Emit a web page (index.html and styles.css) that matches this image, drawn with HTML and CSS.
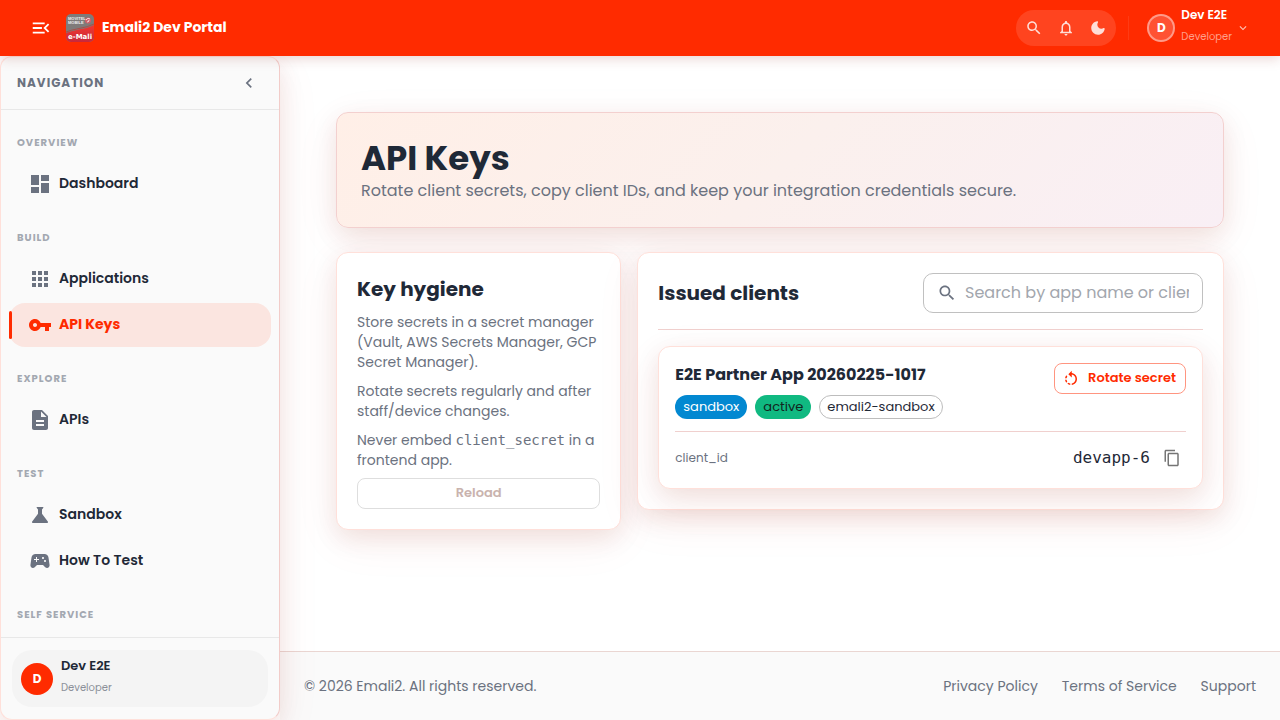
FILE: index.html
```html
<!DOCTYPE html>
<html lang="en">
<head>
<meta charset="utf-8">
<meta name="viewport" content="width=device-width, initial-scale=1">
<title>API Keys - Emali2 Dev Portal</title>
<link rel="stylesheet" href="styles.css">
</head>
<body>
<header class="topbar">
  <button class="icon-btn" type="button" aria-label="Collapse menu"><svg class="i22" viewBox="0 0 24 24"><path d="M3 18h13v-2H3v2zm0-5h10v-2H3v2zm0-7v2h13V6H3zm18 9.59L17.42 12 21 8.41 19.59 7l-5 5 5 5L21 15.59z"/></svg></button>
  <svg class="logo" viewBox="0 0 28 28" role="img" aria-label="e-Mali">
    <defs>
      <linearGradient id="lg" x1="0" y1="0" x2="0" y2="1"><stop offset="0" stop-color="#f2382f"/><stop offset="1" stop-color="#c8283c"/></linearGradient>
      <clipPath id="lc"><rect width="28" height="28" rx="5"/></clipPath>
    </defs>
    <g clip-path="url(#lc)">
      <rect width="28" height="28" fill="#7f7b7a"/>
      <path d="M0 19Q5 17 13 15.500Q22 14 28 11V28H0z" fill="url(#lg)"/>
      <path d="M0 18Q5 16 13 14.500Q22 13 28 10" fill="none" stroke="#a9504b"/>
      <circle cx="22" cy="6.500" r="3" fill="#d0606a"/><path d="M20 6q2-3 4-1M21 8q2 0 2-2" fill="none" stroke="#fff" stroke-width=".8"/>
      <text class="logo-small" x="2" y="6">MOVITEL</text>
      <text class="logo-small" x="2" y="10">MOBILE</text>
      <text class="logo-big" x="2" y="25">e-Mali</text>
    </g>
  </svg>
  <span class="brand">Emali2 Dev Portal</span>
  <div class="tools">
    <button class="tool" type="button" aria-label="Search"><svg class="i18" viewBox="0 0 24 24"><path d="M15.5 14h-.79l-.28-.27C15.41 12.59 16 11.11 16 9.5 16 5.91 13.09 3 9.5 3S3 5.91 3 9.5 5.91 16 9.5 16c1.61 0 3.09-.59 4.23-1.57l.27.28v.79l5 4.99L20.49 19l-4.99-5zm-6 0C7.01 14 5 11.99 5 9.5S7.01 5 9.5 5 14 7.01 14 9.5 11.99 14 9.5 14z"/></svg></button>
    <button class="tool" type="button" aria-label="Notifications"><svg class="i18" viewBox="0 0 24 24"><path d="M12 22c1.1 0 2-.9 2-2h-4c0 1.1.9 2 2 2zm6-6v-5c0-3.07-1.63-5.64-4.5-6.32V4c0-.83-.67-1.5-1.5-1.5s-1.5.67-1.5 1.5v.68C7.64 5.36 6 7.92 6 11v5l-2 2v1h16v-1l-2-2zm-2 1H8v-6c0-2.48 1.51-4.5 4-4.5s4 2.02 4 4.5v6z"/></svg></button>
    <button class="tool" type="button" aria-label="Dark mode"><svg class="i18" viewBox="0 0 24 24"><path d="M11.01 3.05C6.51 3.54 3 7.36 3 12c0 4.97 4.03 9 9 9 4.63 0 8.45-3.5 8.95-8 .09-.79-.78-1.42-1.54-.95-.84.54-1.84.85-2.91.85-2.98 0-5.4-2.42-5.4-5.4 0-1.06.31-2.06.84-2.89.45-.67-.04-1.63-.93-1.56z"/></svg></button>
  </div>
  <button class="account" type="button">
    <span class="avatar avatar-light">D</span>
    <span class="who"><span class="who-name">Dev E2E</span><span class="who-role">Developer</span></span>
    <svg class="i14" viewBox="0 0 24 24"><path d="M7.41 8.59 12 13.17l4.59-4.58L18 10l-6 6-6-6z"/></svg>
  </button>
</header>

<div class="shell">
  <aside class="sidebar">
    <div class="side-head"><span>NAVIGATION</span><button class="icon-btn" type="button" aria-label="Close navigation"><svg class="i20" viewBox="0 0 24 24"><path d="M15.41 7.41 14 6l-6 6 6 6 1.41-1.41L10.83 12z"/></svg></button></div>
    <nav class="side-nav">
      <section class="group"><h2 class="group-title">OVERVIEW</h2>
        <a class="item" href="#"><svg class="i24" viewBox="0 0 24 24"><path d="M3 13h8V3H3v10zm0 8h8v-6H3v6zm10 0h8V11h-8v10zm0-18v6h8V3h-8z"/></svg><span>Dashboard</span></a>
      </section>
      <section class="group"><h2 class="group-title">BUILD</h2>
        <a class="item" href="#"><svg class="i24" viewBox="0 0 24 24"><path d="M4 8h4V4H4v4zm6 12h4v-4h-4v4zm-6 0h4v-4H4v4zm0-6h4v-4H4v4zm6 0h4v-4h-4v4zm6-10v4h4V4h-4zm-6 4h4V4h-4v4zm6 6h4v-4h-4v4zm0 6h4v-4h-4v4z"/></svg><span>Applications</span></a>
        <a class="item active" href="#" aria-current="page"><svg class="i24" viewBox="0 0 24 24"><path d="M12.65 10C11.83 7.67 9.61 6 7 6c-3.31 0-6 2.69-6 6s2.69 6 6 6c2.61 0 4.83-1.67 5.65-4H17v4h4v-4h2v-4H12.65zM7 14c-1.1 0-2-.9-2-2s.9-2 2-2 2 .9 2 2-.9 2-2 2z"/></svg><span>API Keys</span></a>
      </section>
      <section class="group"><h2 class="group-title">EXPLORE</h2>
        <a class="item" href="#"><svg class="i24" viewBox="0 0 24 24"><path d="M14 2H6c-1.1 0-1.99.9-1.99 2L4 20c0 1.1.89 2 1.99 2H18c1.1 0 2-.9 2-2V8l-6-6zm2 16H8v-2h8v2zm0-4H8v-2h8v2zm-3-5V3.5L18.5 9H13z"/></svg><span>APIs</span></a>
      </section>
      <section class="group"><h2 class="group-title">TEST</h2>
        <a class="item" href="#"><svg class="i24" viewBox="0 0 24 24"><path d="M19.8 18.4 14 10.67V6.5l1.35-1.69c.26-.33.03-.81-.39-.81H9.04c-.42 0-.65.48-.39.81L10 6.5v4.17L4.2 18.4c-.49.66-.02 1.6.8 1.6h14c.82 0 1.29-.94.8-1.6z"/></svg><span>Sandbox</span></a>
        <a class="item" href="#"><svg class="i24" viewBox="0 0 24 24"><path d="m21.58 16.09-1.09-7.66C20.21 6.46 18.52 5 16.53 5H7.47C5.48 5 3.79 6.46 3.51 8.43l-1.09 7.66C2.2 17.63 3.39 19 4.94 19c.68 0 1.32-.27 1.8-.75L9 16h6l2.25 2.25c.48.48 1.13.75 1.8.75 1.56 0 2.75-1.37 2.53-2.91zM11 11H9v2H8v-2H6v-1h2V8h1v2h2v1zm4-1c-.55 0-1-.45-1-1s.45-1 1-1 1 .45 1 1-.45 1-1 1zm2 3c-.55 0-1-.45-1-1s.45-1 1-1 1 .45 1 1-.45 1-1 1z"/></svg><span>How To Test</span></a>
      </section>
      <section class="group"><h2 class="group-title">SELF SERVICE</h2></section>
    </nav>
    <div class="side-foot">
      <div class="profile"><span class="avatar avatar-solid">D</span><span class="who"><span class="who-name">Dev E2E</span><span class="who-role">Developer</span></span></div>
    </div>
  </aside>

  <div class="page">
    <main class="content">
      <section class="hero">
        <h1>API Keys</h1>
        <p>Rotate client secrets, copy client IDs, and keep your integration credentials secure.</p>
      </section>
      <div class="columns">
        <section class="card hygiene">
          <h2>Key hygiene</h2>
          <p>Store secrets in a secret manager (Vault, AWS Secrets Manager, GCP Secret Manager).</p>
          <p>Rotate secrets regularly and after staff/device changes.</p>
          <p>Never embed <code>client_secret</code> in a frontend app.</p>
          <button class="reload" type="button" disabled>Reload</button>
        </section>
        <section class="card issued">
          <div class="issued-head">
            <h2>Issued clients</h2>
            <label class="search"><svg class="i20" viewBox="0 0 24 24"><path d="M15.5 14h-.79l-.28-.27C15.41 12.59 16 11.11 16 9.5 16 5.91 13.09 3 9.5 3S3 5.91 3 9.5 5.91 16 9.5 16c1.61 0 3.09-.59 4.23-1.57l.27.28v.79l5 4.99L20.49 19l-4.99-5zm-6 0C7.01 14 5 11.99 5 9.5S7.01 5 9.5 5 14 7.01 14 9.5 11.99 14 9.5 14z"/></svg><input type="text" placeholder="Search by app name or client_id" aria-label="Search by app name or client_id"></label>
          </div>
          <article class="card client">
            <div class="client-head">
              <div>
                <h3>E2E Partner App 20260225-1017</h3>
                <div class="chips"><span class="chip chip-blue">sandbox</span><span class="chip chip-green">active</span><span class="chip chip-line">emali2-sandbox</span></div>
              </div>
              <button class="rotate" type="button"><svg class="i18" viewBox="0 0 24 24"><path d="M7.11 8.53 5.7 7.11C4.8 8.27 4.24 9.61 4.07 11h2.02c.14-.87.49-1.72 1.02-2.47zM6.09 13H4.07c.17 1.39.72 2.73 1.62 3.89l1.41-1.42c-.52-.75-.87-1.59-1.01-2.47zm1.01 5.32c1.16.9 2.51 1.44 3.9 1.61V17.9c-.87-.15-1.71-.49-2.46-1.03L7.1 18.32zM13 4.07V1L8.45 5.55 13 10V6.09c2.84.48 5 2.94 5 5.91s-2.16 5.43-5 5.91v2.02c3.95-.49 7-3.85 7-7.93s-3.05-7.44-7-7.93z"/></svg><span>Rotate secret</span></button>
            </div>
            <div class="client-row">
              <span class="key">client_id</span>
              <code class="value">devapp-6</code>
              <button class="icon-btn copy" type="button" aria-label="Copy client ID"><svg class="i18" viewBox="0 0 24 24"><path d="M16 1H4c-1.1 0-2 .9-2 2v14h2V3h12V1zm3 4H8c-1.1 0-2 .9-2 2v14c0 1.1.9 2 2 2h11c1.1 0 2-.9 2-2V7c0-1.1-.9-2-2-2zm0 16H8V7h11v14z"/></svg></button>
            </div>
          </article>
        </section>
      </div>
    </main>
    <footer class="footer">
      <span>© 2026 Emali2. All rights reserved.</span>
      <nav class="links"><a href="#">Privacy Policy</a><a href="#">Terms of Service</a><a href="#">Support</a></nav>
    </footer>
  </div>
</div>
</body>
</html>
```

FILE: styles.css
```css
:root {
  --red: #ff2b00;
  --ink: #1f2937;
  --muted: #6b7280;
  --surface: #fafafa;
  --peach: #ffe0da;
  --shadow: 0 8px 24px rgba(120, 20, 10, .1), 0 12px 48px rgba(220, 50, 10, .06);
}
* { box-sizing: border-box; }
body {
  margin: 0;
  min-height: 100vh;
  display: flex;
  flex-direction: column;
  background: #fff;
  color: var(--ink);
  font: 14px/20px Poppins, Inter, "Open Sans", sans-serif;
}
h1, h2, h3, p { margin: 0; }
button { font: inherit; color: inherit; background: none; border: 0; padding: 0; }
a { color: inherit; text-decoration: none; }
svg { display: block; flex: none; fill: currentColor; }
code { font-family: "DejaVu Sans Mono", monospace; }
.i14 { width: 14px; height: 14px; }
.i18 { width: 18px; height: 18px; }
.i20 { width: 20px; height: 20px; }
.i22 { width: 22px; height: 22px; }
.i24 { width: 24px; height: 24px; }
.icon-btn { display: grid; place-items: center; }

/* Top bar */
.topbar {
  position: sticky;
  top: 0;
  z-index: 3;
  height: 56px;
  padding: 0 30px;
  display: flex;
  align-items: center;
  background: var(--red);
  color: #fff;
  box-shadow: 0 2px 12px rgba(150, 40, 30, .22);
}
.logo { width: 28px; height: 28px; margin: 0 8px 0 14px; }
.logo-small { font: 700 4px "Liberation Sans", sans-serif; fill: #eee; }
.logo-big { font: 700 7px "DejaVu Sans", sans-serif; fill: #fff; }
.brand { font-size: 14px; font-weight: 700; margin-right: auto; padding-bottom: 2px; }
.tools {
  display: flex;
  height: 36px;
  padding: 0 2px;
  border-radius: 18px;
  background: rgba(255, 255, 255, .12);
}
.tool { width: 32px; display: grid; place-items: center; color: #ffded8; }
.account {
  display: flex;
  align-items: center;
  margin-left: 12px;
  padding-left: 18px;
  border-left: 1px solid rgba(255, 255, 255, .08);
  height: 24px;
  text-align: left;
}
.account .i14 { margin-left: 4px; color: #ffc2b5; }
.account .who { margin: -4px 0 0 6px; }
.account .who-role { color: #ff9f8a; }
.avatar {
  display: grid;
  place-items: center;
  flex: none;
  border-radius: 50%;
  color: #fff;
  font-size: 12px;
  font-weight: 700;
}
.avatar-light { width: 28px; height: 28px; border: 2px solid rgba(255, 255, 255, .42); background: #ff5233; }
.avatar-solid { width: 32px; height: 32px; background: var(--red); }
.who { display: flex; flex-direction: column; }
.who-name { font-size: 12px; line-height: 22px; font-weight: 600; }
.who-role { font-size: 10px; line-height: 22px; color: #8b9099; }

/* Sidebar */
.shell { display: flex; flex: 1; }
.sidebar {
  position: sticky;
  top: 56px;
  z-index: 2;
  width: 280px;
  height: calc(100vh - 56px);
  flex: none;
  display: flex;
  flex-direction: column;
  background: var(--surface);
  border: 1px solid var(--peach);
  border-right-color: #f2ccc9;
  border-radius: 12px;
  box-shadow: var(--shadow);
}
.side-head {
  height: 53px;
  padding: 0 20px 0 16px;
  display: flex;
  align-items: center;
  justify-content: space-between;
  border-bottom: 1px solid #e8e8e8;
  color: var(--muted);
  font-size: 12px;
  font-weight: 700;
  letter-spacing: 1px;
}
.side-nav { flex: 1; min-height: 0; overflow: hidden; padding: 3px 8px 0; }
.group { padding: 22px 0 2px; }
.group-title {
  padding-left: 8px;
  margin-bottom: 11px;
  font-size: 10px;
  line-height: 16px;
  font-weight: 700;
  letter-spacing: 1px;
  color: #a3a8b1;
}
.item {
  position: relative;
  display: flex;
  align-items: center;
  gap: 7px;
  height: 44px;
  padding-left: 19px;
  border-radius: 16px;
  font-size: 14px;
  font-weight: 600;
}
.item + .item { margin-top: 2px; }
.item span { padding-bottom: 3px; }
.item svg { color: var(--muted); }
.item.active, .item.active svg { color: var(--red); }
.item.active { background: #fbe5e0; font-weight: 700; }
.item.active::before {
  content: "";
  position: absolute;
  left: 0;
  top: 8px;
  bottom: 8px;
  width: 3px;
  border-radius: 2px;
  background: var(--red);
}
.side-foot { padding: 12px 11px; border-top: 1px solid #e8e8e8; }
.profile {
  display: flex;
  align-items: center;
  gap: 8px;
  height: 57px;
  padding: 0 9px;
  border-radius: 20px;
  background: #f4f4f4;
}
.profile .who { padding-bottom: 3px; }
.profile .who-name { font-size: 13px; }

/* Main column */
.page { flex: 1; min-width: 0; display: flex; flex-direction: column; }
.content { flex: 1; padding: 56px; }
.hero {
  padding: 27px 24px 23px;
  border: 1px solid #f3d0cf;
  border-radius: 12px;
  background: linear-gradient(135deg, #ffefe7 0%, #fbf0ed 50%, #f9eff5 100%);
  box-shadow: var(--shadow);
}
.hero h1 { font-size: 34px; line-height: 36px; font-weight: 700; }
.hero p { margin-top: 2px; font-size: 16px; line-height: 26px; color: var(--muted); }
.columns {
  display: grid;
  grid-template-columns: repeat(12, minmax(0, 1fr));
  gap: 16px;
  align-items: start;
  margin-top: 24px;
}
.card {
  background: #fff;
  border: 1px solid var(--peach);
  border-radius: 12px;
  box-shadow: var(--shadow);
}
.card h2 { font-size: 20px; line-height: 32px; font-weight: 700; }
.hygiene { grid-column: span 4; padding: 20px; }
.hygiene p { margin-top: 9px; color: var(--muted); }
.hygiene h2 + p { margin-top: 7px; }
.reload {
  width: 100%;
  height: 31px;
  margin-top: 8px;
  padding-bottom: 2px;
  border: 1px solid #dedede;
  border-radius: 8px;
  color: #c9b3ae;
  font-size: 13px;
  font-weight: 600;
}
.issued { grid-column: span 8; padding: 20px; }
.issued-head {
  display: flex;
  align-items: center;
  justify-content: space-between;
  padding-bottom: 16px;
  margin-bottom: 16px;
  border-bottom: 1px solid #f0d0ce;
}
.search {
  display: flex;
  align-items: center;
  gap: 8px;
  width: 280px;
  height: 40px;
  padding: 0 13px;
  border: 1px solid #c0c0c0;
  border-radius: 10px;
  color: var(--muted);
}
.search input {
  flex: 1;
  min-width: 0;
  border: 0;
  outline: 0;
  padding: 0;
  background: none;
  font: inherit;
  font-size: 16px;
  color: var(--ink);
}
.search input::placeholder { color: #a2a6ad; opacity: 1; }
.client { padding: 16px 16px 14px; }
.client-head {
  display: flex;
  align-items: flex-start;
  justify-content: space-between;
  gap: 16px;
  padding-bottom: 12px;
  border-bottom: 1px solid #f0d0ce;
}
.client h3 { font-size: 16px; line-height: 24px; font-weight: 700; }
.chips { display: flex; flex-wrap: wrap; gap: 8px; margin-top: 8px; }
.chip {
  height: 24px;
  padding: 0 7px;
  border: 1px solid transparent;
  border-radius: 12px;
  font-size: 13px;
  line-height: 22px;
}
.chip-blue { background: #0288d1; color: #fff; }
.chip-green { background: #10b981; color: #12251e; }
.chip-line { border-color: #bdbdbd; }
.rotate {
  display: flex;
  align-items: center;
  gap: 8px;
  height: 31px;
  padding: 0 9px 0 7px;
  border: 1px solid #ff9580;
  border-radius: 8px;
  color: var(--red);
  font-size: 13px;
  font-weight: 600;
  white-space: nowrap;
}
.rotate span { padding-bottom: 2px; }
.client-row { display: flex; align-items: center; padding-top: 10px; }
.key { margin-right: auto; font-size: 12px; color: var(--muted); }
.value { font-size: 16px; }
.copy { width: 32px; height: 32px; margin: 0 -2px 0 6px; color: #757575; }

/* Footer */
.footer {
  display: flex;
  align-items: center;
  justify-content: space-between;
  padding: 24px;
  border-top: 1px solid #ead6d2;
  background: var(--surface);
  color: var(--muted);
}
.links { display: flex; gap: 24px; }
```
